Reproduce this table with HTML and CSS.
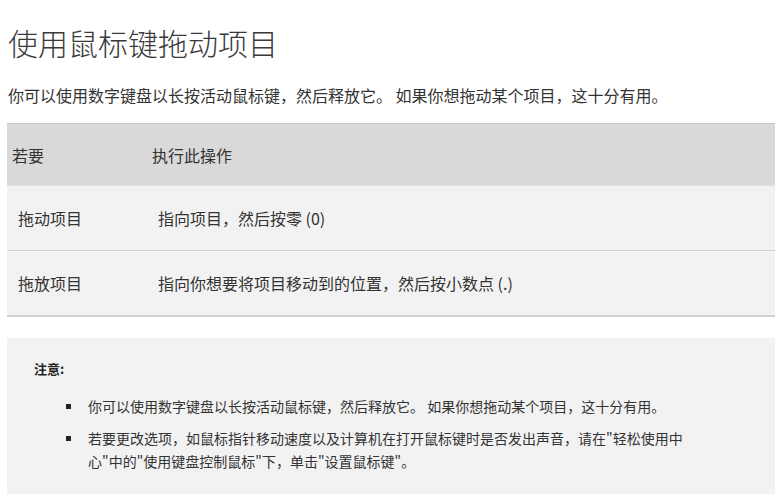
FILE: index.html
```html
<!DOCTYPE html>
<html lang="zh-CN">
<head>
<meta charset="utf-8">
<title>使用鼠标键拖动项目</title>
<link rel="stylesheet" href="styles.css">
</head>
<body>
<main class="page">
  <h1 class="title">使用鼠标键拖动项目</h1>
  <p class="intro">你可以使用数字键盘以长按活动鼠标键，然后释放它。 如果你想拖动某个项目，这十分有用。</p>
  <table class="ops">
    <colgroup><col class="col-a"><col></colgroup>
    <thead>
      <tr><th>若要</th><th>执行此操作</th></tr>
    </thead>
    <tbody>
      <tr><td>拖动项目</td><td>指向项目，然后按零 (0)</td></tr>
      <tr><td>拖放项目</td><td>指向你想要将项目移动到的位置，然后按小数点 (.)</td></tr>
    </tbody>
  </table>
  <section class="note">
    <p class="note-title">注意:</p>
    <ul class="note-list">
      <li>你可以使用数字键盘以长按活动鼠标键，然后释放它。 如果你想拖动某个项目，这十分有用。</li>
      <li>若要更改选项，如鼠标指针移动速度以及计算机在打开鼠标键时是否发出声音，请在"轻松使用中心"中的"使用键盘控制鼠标"下，单击"设置鼠标键"。</li>
    </ul>
  </section>
</main>
</body>
</html>
```

FILE: styles.css
```css
html, body {
  margin: 0;
  padding: 0;
  background: #fff;
}
body {
  font-family: "Noto Sans CJK SC", "Noto Sans", "Liberation Sans", sans-serif;
  color: #333;
}
.page {
  padding: 0 8px 0 7px;
}
.title {
  margin: 22px 0 0 1px;
  font-size: 30px;
  line-height: 40px;
  font-weight: 200;
  color: #3a3a3a;
}
.intro {
  margin: 21px 0 0 1px;
  font-size: 16px;
  line-height: 24px;
}
.ops {
  width: 100%;
  table-layout: fixed;
  margin-top: 16px;
  border-collapse: collapse;
  font-size: 16px;
  line-height: 22px;
}
.ops .col-a {
  width: 140px;
}
.ops th {
  background: #d9d9d9;
  font-weight: normal;
  text-align: left;
  padding: 20px 5px 19px 5px;
  border-top: 1px solid #c8c8c8;
  border-bottom: 1px solid #e2e2e2;
}
.ops td {
  background: #f2f2f2;
  padding: 21px 10px 21px 11px;
  border-bottom: 1px solid #d0d0d0;
}
.ops tbody tr:last-child td {
  border-bottom: 2px solid #d0d0d0;
}
.note {
  margin-top: 21px;
  background: #f2f2f2;
  padding: 21px 0 21px 27px;
}
.note-title {
  margin: 0;
  font-size: 13px;
  line-height: 20px;
  font-weight: bold;
  color: #222;
}
.note-list {
  list-style: none;
  margin: 16px 0 0 0;
  padding: 0 0 0 54px;
  max-width: 604px;
  font-size: 14px;
  line-height: 23px;
}
.note-list li {
  position: relative;
}
.note-list li + li {
  margin-top: 9px;
}
.note-list li::before {
  content: "";
  position: absolute;
  left: -22px;
  top: 9px;
  width: 5px;
  height: 5px;
  background: #222;
}
```
